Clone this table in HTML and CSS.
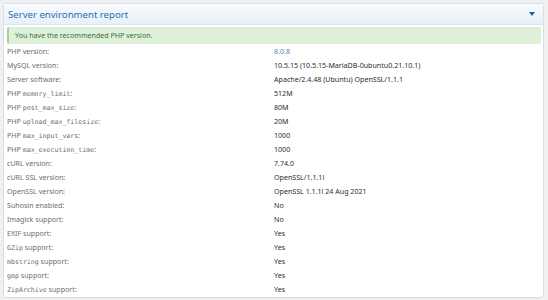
FILE: index.html
```html
<!DOCTYPE html>
<html>
<head>
    <title>Server environment report</title>
    <link rel="stylesheet" href="styles.css">
</head>
<body>
    <div class="block">
        <div class="block-header">
            <h2>Server environment report</h2>
            <span class="toggle"></span>
        </div>
        <div class="block-body">
            <div class="notice">You have the recommended PHP version.</div>
            <dl class="report">
                <dt>PHP version:</dt><dd class="good">8.0.8</dd>
                <dt>MySQL version:</dt><dd>10.5.15 (10.5.15-MariaDB-0ubuntu0.21.10.1)</dd>
                <dt>Server software:</dt><dd>Apache/2.4.48 (Ubuntu) OpenSSL/1.1.1</dd>
                <dt>PHP <code>memory_limit</code>:</dt><dd>512M</dd>
                <dt>PHP <code>post_max_size</code>:</dt><dd>80M</dd>
                <dt>PHP <code>upload_max_filesize</code>:</dt><dd>20M</dd>
                <dt>PHP <code>max_input_vars</code>:</dt><dd>1000</dd>
                <dt>PHP <code>max_execution_time</code>:</dt><dd>1000</dd>
                <dt>cURL version:</dt><dd>7.74.0</dd>
                <dt>cURL SSL version:</dt><dd>OpenSSL/1.1.1l</dd>
                <dt>OpenSSL version:</dt><dd>OpenSSL 1.1.1l 24 Aug 2021</dd>
                <dt>Suhosin enabled:</dt><dd>No</dd>
                <dt>Imagick support:</dt><dd>No</dd>
                <dt>EXIF support:</dt><dd>Yes</dd>
                <dt><code>GZip</code> support:</dt><dd>Yes</dd>
                <dt><code>mbstring</code> support:</dt><dd>Yes</dd>
                <dt><code>gmp</code> support:</dt><dd>Yes</dd>
                <dt><code>ZipArchive</code> support:</dt><dd>Yes</dd>
            </dl>
        </div>
    </div>
</body>
</html>
```

FILE: styles.css
```css
body { margin: 0; padding: 3px 4px 3px 3px; background: #eef0f2; font-family: "Noto Sans", sans-serif; }
.block { background: #fff; border: 1px solid #d8dee4; border-radius: 3px; }
.block-header { display: flex; align-items: center; justify-content: space-between; height: 20px; padding: 0 8px 0 4px; background: linear-gradient(to bottom, #f8fbfe, #e7f0f9); border-bottom: 1px solid #dce6ef; }
.block-header h2 { margin: 0; font-size: 9.6px; font-weight: normal; color: #2f6cad; }
.toggle { width: 0; height: 0; border-left: 3.5px solid transparent; border-right: 3.5px solid transparent; border-top: 4px solid #2d5f93; }
.block-body { padding: 2px 2px 1px 3px; }
.notice { height: 17px; line-height: 17px; padding-left: 6px; background: #dff0d8; border-left: 2px solid #a9cf9c; border-radius: 2px; color: #35703a; font-size: 7.1px; }
.report { display: grid; grid-template-columns: 267px 1fr; grid-auto-rows: 14px; margin: 0; font-size: 7.1px; line-height: 14px; }
.report dt { color: #6e6e6e; }
.report dd { margin: 0; color: #2c2c2c; }
.report dd.good { color: #4a82c0; }
.report code { font-family: "DejaVu Sans Mono", monospace; font-size: 6.6px; line-height: 1; }
```
